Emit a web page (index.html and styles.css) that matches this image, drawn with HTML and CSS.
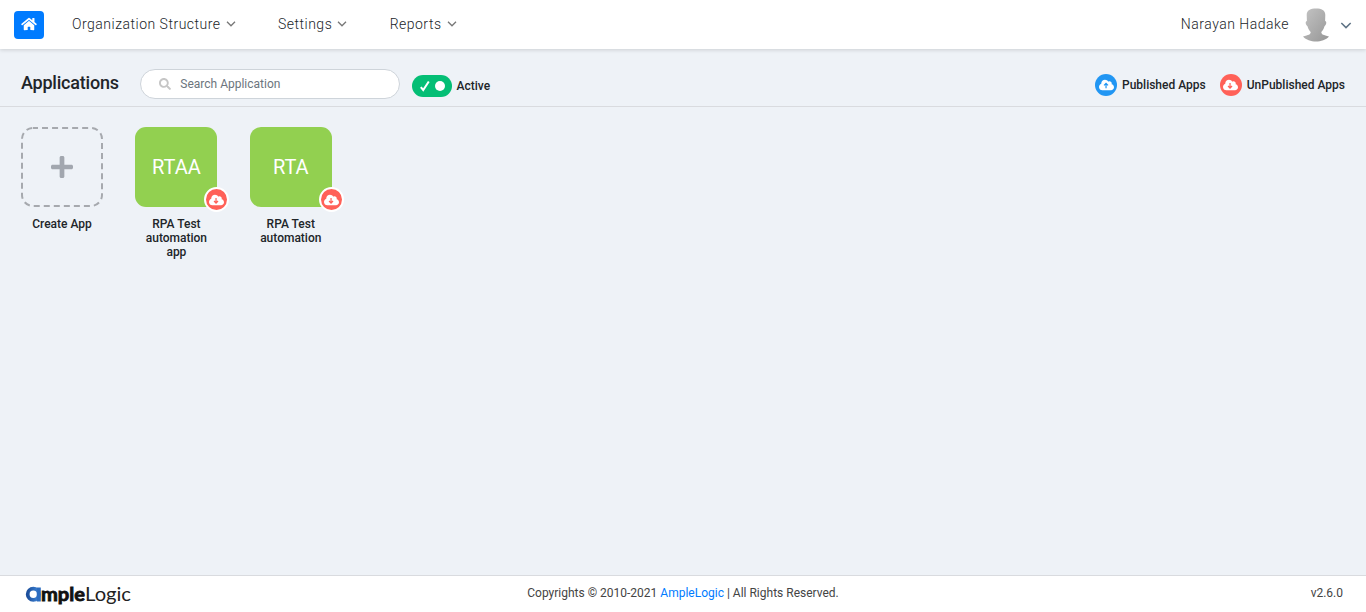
FILE: index.html
```html
<!DOCTYPE html>
<html lang="en">
<head>
<meta charset="utf-8">
<title>Applications</title>
<link rel="stylesheet" href="styles.css">
</head>
<body>
<svg width="0" height="0" class="defs">
  <defs>
    <symbol id="chevron" viewBox="0 0 10 6"><path d="M1 .8l4 4 4-4" fill="none" stroke="currentColor" stroke-width="1.3"/></symbol>
    <symbol id="cloud" viewBox="0 0 640 512"><path fill="#fff" d="M537.6 226.6c4.1-10.7 6.4-22.4 6.4-34.6 0-53-43-96-96-96-19.7 0-38.1 6-53.3 16.2C367 64.2 315.3 32 256 32c-88.4 0-160 71.6-160 160 0 2.7.1 5.4.2 8.1C40.2 219.8 0 273.2 0 336c0 79.5 64.5 144 144 144h368c70.7 0 128-57.3 128-128 0-61.9-44-113.6-102.4-125.4z"/></symbol>
    <symbol id="cloud-up" viewBox="0 0 640 512"><use href="#cloud"/><path d="M300 395V200M215 270l85-85 85 85" fill="none" stroke="currentColor" stroke-width="52"/></symbol>
    <symbol id="cloud-down" viewBox="0 0 640 512"><use href="#cloud"/><path d="M300 175v195M215 300l85 85 85-85" fill="none" stroke="currentColor" stroke-width="52"/></symbol>
  </defs>
</svg>
<header class="topbar">
  <a class="home"><svg width="16" height="14" viewBox="0 0 576 512"><path fill="#fff" d="M280.37 148.26L96 300.11V464a16 16 0 0 0 16 16l112.06-.29a16 16 0 0 0 15.92-16V368a16 16 0 0 1 16-16h64a16 16 0 0 1 16 16v95.64a16 16 0 0 0 16 16.05L464 480a16 16 0 0 0 16-16V300L295.67 148.26a12.19 12.19 0 0 0-15.3 0zM571.6 251.47L488 182.56V44.05a12 12 0 0 0-12-12h-56a12 12 0 0 0-12 12v72.61L318.47 43a48 48 0 0 0-61 0L4.34 251.47a12 12 0 0 0-1.6 16.9l25.5 31A12 12 0 0 0 45.15 301l235.22-193.74a12.19 12.19 0 0 1 15.3 0L530.9 301a12 12 0 0 0 16.9-1.6l25.5-31a12 12 0 0 0-1.7-16.93z"/></svg></a>
  <nav class="menu">
    <a class="menu-item">Organization Structure<svg class="chev"><use href="#chevron"/></svg></a>
    <a class="menu-item">Settings<svg class="chev"><use href="#chevron"/></svg></a>
    <a class="menu-item">Reports<svg class="chev"><use href="#chevron"/></svg></a>
  </nav>
  <div class="user">
    <span class="user-name">Narayan Hadake</span>
    <svg class="avatar" width="28" height="34" viewBox="0 0 28 34">
      <defs><linearGradient id="skin" x1="0" y1="0" x2="1" y2="1"><stop offset="0" stop-color="#c4c4c4"/><stop offset="1" stop-color="#969696"/></linearGradient></defs>
      <path fill="url(#skin)" d="M14 .5c5.500 0 9.300 1.500 9.300 6.500l-.2 6c1.800.2 1.500 3.500-.6 5.300C21.700 21 20.500 23 19.300 24c0 2.500 2.200 3 7.700 4.500C24 32 19 33.500 14 33.500S4 32 1 28.500c5.500-1.500 7.700-2 7.700-4.500-1.200-1-2.400-3-3.200-5.700C3.400 16.500 3.100 13.200 4.900 13l-.2-6C4.700 2 8.500.5 14 .5z"/>
    </svg>
    <svg class="chev chev-user"><use href="#chevron"/></svg>
  </div>
</header>
<section class="toolbar">
  <h1 class="title">Applications</h1>
  <label class="search">
    <svg width="12" height="12" viewBox="0 0 512 512"><path fill="#c6c6c6" d="M505 442.700L405.300 343c-4.500-4.500-10.600-7-17-7H372c27.600-35.300 44-79.700 44-128C416 93.100 322.900 0 208 0S0 93.100 0 208s93.100 208 208 208c48.300 0 92.700-16.400 128-44v16.300c0 6.400 2.500 12.500 7 17l99.700 99.700c9.400 9.400 24.600 9.400 33.900 0l28.300-28.300c9.400-9.400 9.400-24.600.1-34zM208 336c-70.700 0-128-57.200-128-128 0-70.700 57.200-128 128-128 70.700 0 128 57.200 128 128 0 70.700-57.200 128-128 128z"/></svg>
    <span>Search Application</span>
  </label>
  <div class="switch">
    <svg width="12" height="12" viewBox="0 0 12 12"><path d="M1.800 7.200L4.200 10 9.800 1.500" fill="none" stroke="#fff" stroke-width="2"/></svg>
    <span class="knob"></span>
  </div>
  <span class="switch-label">Active</span>
  <div class="legend">
    <span class="dot dot-blue"><svg width="15" height="12"><use href="#cloud-up"/></svg></span><span class="legend-text">Published Apps</span>
    <span class="dot dot-red"><svg width="15" height="12"><use href="#cloud-down"/></svg></span><span class="legend-text">UnPublished Apps</span>
  </div>
</section>
<main class="apps">
  <div class="app">
    <div class="tile tile-new">
      <svg class="outline" width="82" height="80" viewBox="0 0 82 80"><rect x="1" y="1" width="80" height="78" rx="11" fill="none" stroke="#a6a9ae" stroke-width="2" stroke-dasharray="6 4.030" stroke-dashoffset="1"/></svg>
      <svg class="plus" width="22" height="22" viewBox="0 32 448 448"><path fill="#a2a7af" d="M416 208H272V64c0-17.670-14.330-32-32-32h-32c-17.670 0-32 14.330-32 32v144H32c-17.670 0-32 14.330-32 32v32c0 17.670 14.330 32 32 32h144v144c0 17.670 14.330 32 32 32h32c17.670 0 32-14.330 32-32V304h144c17.670 0 32-14.330 32-32v-32c0-17.670-14.330-32-32-32z"/></svg>
    </div>
    <div class="app-name">Create App</div>
  </div>
  <div class="app">
    <div class="tile tile-app">RTAA<span class="badge"><svg width="15" height="12"><use href="#cloud-down"/></svg></span></div>
    <div class="app-name">RPA Test automation app</div>
  </div>
  <div class="app">
    <div class="tile tile-app">RTA<span class="badge"><svg width="15" height="12"><use href="#cloud-down"/></svg></span></div>
    <div class="app-name">RPA Test automation</div>
  </div>
</main>
<footer class="footer">
  <svg class="logo" width="108" height="28" viewBox="0 0 108 28">
    <defs><linearGradient id="ring" x1="0" y1="0" x2="1" y2="0"><stop offset="0" stop-color="#1c4f9c"/><stop offset="1" stop-color="#3f86d8"/></linearGradient></defs>
    <circle cx="8.300" cy="12.300" r="5.600" fill="none" stroke="url(#ring)" stroke-width="3.800"/>
    <path d="M11.800 5.500h4v14h-4z" fill="#2b6cc0"/>
    <text x="16" y="19" class="logo-bold" textLength="44" lengthAdjust="spacingAndGlyphs">mple</text>
    <text x="60" y="19" class="logo-thin" textLength="46" lengthAdjust="spacingAndGlyphs">Logic</text>
  </svg>
  <div class="copy">Copyrights © 2010-2021 <a>AmpleLogic</a> | All Rights Reserved.</div>
  <div class="version">v2.6.0</div>
</footer>
</body>
</html>
```
FILE: styles.css
```css
* { box-sizing: border-box; }
body {
  margin: 0;
  height: 612px;
  display: flex;
  flex-direction: column;
  overflow: hidden;
  background: #eef2f7;
  color: #212529;
  font: 12px/14px Roboto, sans-serif;
}
svg { display: block; flex: none; }
.defs { position: absolute; }
.topbar {
  height: 49px;
  flex: none;
  display: flex;
  align-items: center;
  padding: 0 14px;
  background: #fff;
  box-shadow: 0 1px 4px rgba(0, 0, 0, .15);
  font-size: 14px;
  font-weight: 300;
  letter-spacing: .5px;
  color: #212529;
}
.home {
  width: 30px;
  height: 28px;
  margin-top: 1px;
  padding-bottom: 2px;
  display: flex;
  align-items: center;
  justify-content: center;
  border-radius: 4px;
  background: #007bff;
}
.menu { display: flex; gap: 42.400px; margin: 0 0 2px 28px; }
.menu-item { display: flex; align-items: center; gap: 5px; }
.chev { width: 10px; height: 6px; color: #777; margin-top: 1px; }
.user { display: flex; align-items: center; margin-left: auto; }
.user-name { margin-bottom: 2px; }
.avatar { margin: 1px 10px 0 13px; }
.chev-user { width: 12px; height: 7px; color: #5d7285; }
.toolbar {
  height: 58px;
  flex: none;
  display: flex;
  padding: 0 21px;
  border-bottom: 1px solid #d9dbdf;
  font-weight: 500;
}
.title {
  width: 119px;
  margin: 23px 0 0;
  font-size: 18px;
  line-height: 22px;
  font-weight: 500;
  letter-spacing: -.22px;
}
.search {
  width: 260px;
  height: 30px;
  margin-top: 20px;
  padding: 0 18px 1px;
  display: flex;
  align-items: center;
  gap: 9.300px;
  border: 1px solid #ced4da;
  border-radius: 15px;
  background: #fff;
  color: #6c757d;
  font-weight: 400;
}
.switch {
  width: 40px;
  height: 22px;
  margin: 26px 4.600px 0 12px;
  padding: 0 7px;
  display: flex;
  align-items: center;
  justify-content: space-between;
  border-radius: 11px;
  background: #04be75;
}
.knob { width: 10px; height: 10px; border-radius: 50%; background: #fff; }
.switch-label { margin-top: 30px; }
.legend { display: flex; align-items: center; height: 22px; margin: 25px 0 0 auto; }
.dot {
  width: 22px;
  height: 22px;
  margin-right: 5px;
  display: flex;
  align-items: center;
  justify-content: center;
  border-radius: 50%;
}
.dot-blue { background: #2196f3; color: #2196f3; }
.dot-red { background: #ff6158; color: #ff6158; margin-left: 14px; }
.apps { flex: 1; display: flex; gap: 32.400px; padding: 20px 21px; }
.app { width: 82px; }
.tile {
  position: relative;
  height: 80px;
  display: flex;
  align-items: center;
  justify-content: center;
  border-radius: 11px;
}
.outline { position: absolute; inset: 0; }
.tile-app { background: #92d050; color: #fff; font-size: 20px; }
.badge {
  position: absolute;
  right: -12px;
  bottom: -5px;
  width: 25px;
  height: 25px;
  display: flex;
  align-items: center;
  justify-content: center;
  border: 2px solid #fff;
  border-radius: 50%;
  background: #ff6158;
  color: #ff6158;
}
.app-name { margin: 10px 8px 0; text-align: center; font-weight: 500; }
.footer {
  height: 37px;
  flex: none;
  display: grid;
  grid-template-columns: 1fr auto 1fr;
  align-items: center;
  padding: 0 23px 2px 25px;
  border-top: 1px solid #d9dbdf;
  background: #fff;
  color: #444;
}
.copy { margin: 0 1px 0 -1px; }
.copy a { color: #007bff; }
.version { text-align: right; }
.logo { margin-top: 6px; }
.logo-bold { font: 700 18.500px Lato, sans-serif; fill: #111; stroke: #111; stroke-width: .8px; }
.logo-thin { font: 400 19px Lato, sans-serif; fill: #222; }
```
